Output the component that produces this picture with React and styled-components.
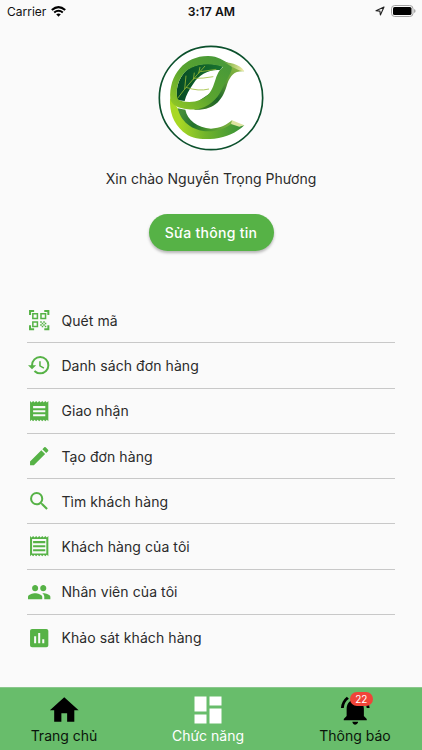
import React from 'react';
import styled, { createGlobalStyle } from 'styled-components';
import {
  MdQrCodeScanner, MdHistory, MdReceipt, MdEdit, MdSearch, MdOutlineReceipt,
  MdGroup, MdAssessment, MdHome, MdDashboard, MdNotificationsActive,
} from 'react-icons/md';

const GlobalStyle = createGlobalStyle`
  * { box-sizing: border-box; }
  body { margin: 0; background: #fafafa; font-family: Inter, "Noto Sans", sans-serif; }
`;

const Screen = styled.div`
  width: 422px;
  height: 750px;
  display: flex;
  flex-direction: column;
  background: #fafafa;
  color: #2b2b2b;
  overflow: hidden;
`;

const StatusBar = styled.header`
  display: grid;
  grid-template-columns: 1fr auto 1fr;
  align-items: center;
  height: 22px;
  padding: 0 6px 0 7px;
  color: #111;
  font-size: 12px;
  flex: none;
`;

const Carrier = styled.div`
  display: flex;
  align-items: center;
  gap: 5px;
  letter-spacing: 0;
`;

const Clock = styled.div`
  font-weight: 600;
  font-size: 12.2px;
  letter-spacing: 0.05px;
`;

const StatusIcons = styled.div`
  display: flex;
  align-items: center;
  justify-content: flex-end;
  gap: 6px;
`;

const Profile = styled.section`
  display: flex;
  flex-direction: column;
  align-items: center;
  height: 276px;
  padding-top: 16px;
  flex: none;
`;

const Greeting = styled.p`
  margin: 11px 0 0;
  line-height: 20px;
  font-size: 14px;
  letter-spacing: 0.02px;
`;

const EditButton = styled.button`
  margin-top: 25px;
  width: 125px;
  height: 37px;
  border: 0;
  border-radius: 19px;
  background: #56b246;
  color: #fff;
  font: 500 14px/37px Inter, "Noto Sans", sans-serif;
  letter-spacing: 0.3px;
  padding: 0;
  white-space: nowrap;
  box-shadow: 0 2px 3px rgba(0, 0, 0, 0.28);
`;

const Menu = styled.ul`
  list-style: none;
  margin: 0 27px;
  padding: 0;
  flex: 1;
`;

const MenuItem = styled.li`
  display: flex;
  align-items: center;
  gap: 10px;
  height: 45.3px;
  border-bottom: 1px solid #c8c8c8;
  font-size: 14px;
  letter-spacing: 0.08px;

  &:last-child { border-bottom: 0; }
  svg { color: #56b246; font-size: 24.4px; flex: none; }
`;

const TabBar = styled.nav`
  display: grid;
  grid-template-columns: 128px 1fr 134px;
  height: 63px;
  background: #68bd6b;
  border-top: 1px solid #8ac78c;
  flex: none;
`;

const Tab = styled.div`
  display: flex;
  flex-direction: column;
  align-items: center;
  color: ${(p) => (p.$active ? '#fff' : '#0a140a')};
  font-size: 14px;
  line-height: 18px;
  letter-spacing: 0;
`;

const TabIcon = styled.span`
  position: relative;
  display: flex;
  align-items: center;
  justify-content: center;
  height: 36px;
  margin: 4px 0 -1px;
  color: ${(p) => (p.$active ? '#fff' : '#000')};
  font-size: ${(p) => (p.$active ? 36 : 34.5)}px;
`;

const Badge = styled.span`
  position: absolute;
  top: 0;
  left: 12px;
  width: 23px;
  height: 14px;
  border-radius: 7px;
  background: #f04438;
  color: #fff;
  font-size: 10px;
  line-height: 14px;
  text-align: center;
`;

const WifiIcon = () => (
  <svg width="15" height="11" viewBox="0 0 15 11" fill="none" stroke="#000" strokeWidth="2.1">
    <path d="M.8 4Q7.5-1.8 14.2 4M3.2 6.5Q7.5 3 11.8 6.5" />
    <path d="M5.2 8.3Q7.5 6.6 9.8 8.3L7.5 10.7Z" fill="#000" stroke="none" />
  </svg>
);

const LocationIcon = () => (
  <svg width="10" height="10" viewBox="0 0 10 10" fill="none" stroke="#222" strokeWidth="1.1" strokeLinejoin="round">
    <path d="M9 1 1 4.7 4.9 5.1 5.4 9Z" />
  </svg>
);

const BatteryIcon = () => (
  <svg width="25" height="12" viewBox="0 0 25 12">
    <rect x=".5" y=".5" width="21.5" height="11" rx="3.2" fill="none" stroke="#a2a2a2" />
    <rect x="2" y="2" width="18.5" height="8" rx="1.6" fill="#000" />
    <path d="M23.2 4v4q1.3-.5 1.3-2t-1.3-2" fill="#999" />
  </svg>
);

const Logo = () => (
  <svg width="120" height="120" viewBox="0 0 360 360">
    <defs>
      <linearGradient id="face" gradientUnits="userSpaceOnUse" x1="215" y1="80" x2="80" y2="225">
        <stop offset="0" stopColor="#4a9a38" />
        <stop offset=".5" stopColor="#5aa42f" />
        <stop offset="1" stopColor="#94c926" />
      </linearGradient>
      <linearGradient id="foot" gradientUnits="userSpaceOnUse" x1="85" y1="260" x2="280" y2="262">
        <stop offset="0" stopColor="#a8d824" />
        <stop offset=".4" stopColor="#72b42b" />
        <stop offset="1" stopColor="#35903a" />
      </linearGradient>
      <linearGradient id="side" gradientUnits="userSpaceOnUse" x1="262" y1="85" x2="165" y2="215">
        <stop offset="0" stopColor="#8db944" />
        <stop offset=".3" stopColor="#67a23a" />
        <stop offset=".72" stopColor="#1c6428" />
        <stop offset="1" stopColor="#3d7c25" />
      </linearGradient>
      <linearGradient id="tip" gradientUnits="userSpaceOnUse" x1="215" y1="70" x2="280" y2="100">
        <stop offset="0" stopColor="#5a9d38" />
        <stop offset=".45" stopColor="#a9c866" />
        <stop offset="1" stopColor="#f4eeb0" />
      </linearGradient>
      <linearGradient id="inner" gradientUnits="userSpaceOnUse" x1="95" y1="215" x2="240" y2="265">
        <stop offset="0" stopColor="#448d38" />
        <stop offset=".3" stopColor="#22722c" />
        <stop offset=".6" stopColor="#4b962b" />
        <stop offset="1" stopColor="#7fb243" />
      </linearGradient>
      <linearGradient id="leaf" x1="0" y1="0" x2="1" y2="0">
        <stop offset="0" stopColor="#064a25" />
        <stop offset="1" stopColor="#19752f" />
      </linearGradient>
    </defs>
    <circle cx="180" cy="180" r="155" fill="#fff" stroke="#0b502c" strokeWidth="5" />
    <path d="M80 211 103 215C109 246 139 269 180 272 208 271 228 260 243 247L252 267 174 288 119 279 85 247Z" fill="url(#inner)" />
    <path d="M57 181C55 222 67 256 96 281 120 301 150 306 190 302 226 299 256 284 280 262L263 262 244 254C228 270 202 280 172 280 121 279 88 248 80 210Z" fill="url(#foot)" />
    <path d="M243 247 280 262 265 266 240 258Z" fill="#dde3a0" />
    <path d="M78 186C72 148 87 106 120 88 151 74 188 75 216 85L207 96C174 93 143 110 128 136 114 156 105 172 101 189Z" fill="url(#leaf)" />
    <path d="M280 100C250 98 239 112 229 137 216 183 195 216 133 215L115 207 188 159 220 85 245 80Z" fill="url(#side)" />
    <path d="M58 184C53 109 103 53 172 54 202 54 216 69 236 77 249 85 241 102 229 122 209 157 206 178 173 200 152 214 133 216 111 214 80 211 62 201 58 184ZM79 182C91 193 125 195 147 186 201 164 183 112 216 87 187 75 148 76 121 89 87 105 72 145 79 182Z" fill="url(#face)" fillRule="evenodd" />
    <path d="M212 68C231 77 266 73 280 100 261 98 247 88 212 68Z" fill="url(#tip)" />
    <path d="M79 182C101 151 130 120 162 84M101 153 105 113M127 125 130 104M143 106 147 87M105 148Q143 161 174 153M128 121Q155 122 187 116M148 101Q170 98 196 94" fill="none" stroke="#9abc35" strokeWidth="2.4" />
  </svg>
);

const menuItems = [
  [MdQrCodeScanner, 'Quét mã'],
  [MdHistory, 'Danh sách đơn hàng'],
  [MdReceipt, 'Giao nhận'],
  [MdEdit, 'Tạo đơn hàng'],
  [MdSearch, 'Tìm khách hàng'],
  [MdOutlineReceipt, 'Khách hàng của tôi'],
  [MdGroup, 'Nhân viên của tôi'],
  [MdAssessment, 'Khảo sát khách hàng'],
];

export default function App() {
  return (
    <>
      <GlobalStyle />
      <Screen>
        <StatusBar>
          <Carrier>Carrier <WifiIcon /></Carrier>
          <Clock>3:17 AM</Clock>
          <StatusIcons><LocationIcon /><BatteryIcon /></StatusIcons>
        </StatusBar>
        <Profile>
          <Logo />
          <Greeting>Xin chào Nguyễn Trọng Phương</Greeting>
          <EditButton>Sửa thông tin</EditButton>
        </Profile>
        <Menu>
          {menuItems.map(([Icon, label]) => (
            <MenuItem key={label}><Icon />{label}</MenuItem>
          ))}
        </Menu>
        <TabBar>
          <Tab><TabIcon><MdHome /></TabIcon>Trang chủ</Tab>
          <Tab $active><TabIcon $active><MdDashboard /></TabIcon>Chức năng</Tab>
          <Tab><TabIcon><MdNotificationsActive /><Badge>22</Badge></TabIcon>Thông báo</Tab>
        </TabBar>
      </Screen>
    </>
  );
}
